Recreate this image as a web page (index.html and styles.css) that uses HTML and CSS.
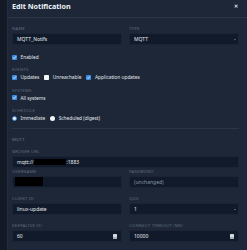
FILE: index.html
```html
<!DOCTYPE html>
<html lang="en">
<head>
    <meta charset="UTF-8">
    <title>Edit Notification</title>
    <link rel="stylesheet" href="styles.css">
</head>
<body>
    <div class="modal">
        <div class="modalHeader">
            <h1>Edit Notification</h1>
            <span class="close">&#x2715;</span>
        </div>

        <div class="modalBody">
            <div class="fieldRow">
                <div class="field">
                    <label>Name</label>
                    <div class="input">MQTT_Notifs</div>
                </div>
                <div class="field">
                    <label>Type</label>
                    <div class="input select">MQTT <span class="caret"></span></div>
                </div>
            </div>

            <div class="checkRow enabled">
                <span class="check on"><svg viewBox="0 0 10 10"><path d="M2.2 5.2l2 2 3.6-4.4" /></svg></span>Enabled
            </div>

            <div class="group">
                <div class="groupLabel">Events</div>
                <div class="checkRow">
                    <span class="check on"><svg viewBox="0 0 10 10"><path d="M2.2 5.2l2 2 3.6-4.4" /></svg></span>Updates
                    <span class="check"></span>Unreachable
                    <span class="check on"><svg viewBox="0 0 10 10"><path d="M2.2 5.2l2 2 3.6-4.4" /></svg></span>Application updates
                </div>
            </div>

            <div class="group">
                <div class="groupLabel">Systems</div>
                <div class="checkRow">
                    <span class="check on"><svg viewBox="0 0 10 10"><path d="M2.2 5.2l2 2 3.6-4.4" /></svg></span>All systems
                </div>
            </div>

            <div class="group">
                <div class="groupLabel">Schedule</div>
                <div class="checkRow">
                    <span class="radio on"></span>Immediate
                    <span class="radio"></span>Scheduled (digest)
                </div>
            </div>

            <hr>

            <div class="groupLabel section">MQTT</div>

            <div class="field">
                <label>Broker URL</label>
                <div class="input">mqtt://<span class="redact wide"></span>:1883</div>
            </div>

            <div class="fieldRow">
                <div class="field">
                    <label>Username</label>
                    <div class="input"><span class="redact user"></span></div>
                </div>
                <div class="field">
                    <label>Password</label>
                    <div class="input muted">(unchanged)</div>
                </div>
            </div>

            <div class="fieldRow">
                <div class="field">
                    <label>Client ID</label>
                    <div class="input">linux-update</div>
                </div>
                <div class="field">
                    <label>QoS</label>
                    <div class="input select">1 <span class="caret"></span></div>
                </div>
            </div>

            <div class="fieldRow">
                <div class="field">
                    <label>Keepalive (s)</label>
                    <div class="input number">60 <span class="spin"></span></div>
                </div>
                <div class="field">
                    <label>Connect timeout (ms)</label>
                    <div class="input number">10000 <span class="spin"></span></div>
                </div>
            </div>
        </div>
    </div>
</body>
</html>
```

FILE: styles.css
```css
* {
    margin: 0;
    padding: 0;
    box-sizing: border-box;
    font-family: "Noto Sans", "Open Sans", sans-serif;
}

body {
    background: #131a25;
    width: 247px;
    height: 250px;
    overflow: hidden;
}

.modal {
    margin-left: 7px;
    height: 250px;
    background: #1d2738;
    border-left: 1px solid #232e40;
    color: #dfe4ea;
}

.modalHeader {
    height: 18px;
    display: flex;
    justify-content: space-between;
    align-items: center;
    padding: 0 9px 5px 4px;
    border-bottom: 1px solid #2a3546;
}

h1 {
    font-size: 7.2px;
    font-weight: 700;
    color: #eef1f5;
}

.close {
    font-size: 5px;
    font-weight: 700;
    color: #dfe4ea;
}

.modalBody {
    padding: 7px 8px 0 4px;
    display: flex;
    flex-direction: column;
}

.fieldRow {
    display: grid;
    grid-template-columns: 1fr 1fr;
    gap: 7px;
    margin-bottom: 7px;
}

.field label,
.groupLabel {
    display: block;
    font-size: 4.3px;
    line-height: 6px;
    letter-spacing: 0.2px;
    text-transform: uppercase;
    color: #5f6b7d;
}

.field label {
    margin-bottom: 2px;
}

.input {
    height: 12px;
    display: flex;
    align-items: center;
    padding: 0 4px;
    background: #111a2a;
    border: 1px solid #1a2435;
    border-radius: 2px;
    font-size: 5px;
    color: #e8ecf1;
    position: relative;
}

.input.muted {
    color: #8a95a5;
}

.caret {
    position: absolute;
    right: 2px;
    top: 5px;
    border-left: 1.3px solid transparent;
    border-right: 1.3px solid transparent;
    border-top: 1.3px solid #8791a0;
}

.spin {
    position: absolute;
    right: 4px;
    top: 3px;
    width: 4px;
    height: 5px;
    background: #d5d9df;
    border-radius: 0.5px;
    box-shadow: inset 0 -2px 0 #a9b0ba;
}

.redact {
    display: inline-block;
    background: #000;
}

.redact.wide {
    width: 32px;
    height: 6px;
    margin-left: 1px;
}

.redact.user {
    width: 28px;
    height: 9px;
    margin-left: -2px;
}

.checkRow {
    display: flex;
    align-items: center;
    height: 6px;
    font-size: 4.8px;
    color: #e3e7ec;
}

.checkRow.enabled {
    margin-bottom: 6px;
    margin-top: 2px;
}

.check,
.radio {
    width: 5px;
    height: 5px;
    margin-right: 3.5px;
    background: #f4f5f7;
    border-radius: 0.8px;
    display: inline-flex;
}

.checkRow .check:not(:first-child),
.checkRow .radio:not(:first-child) {
    margin-left: 5px;
}

.check.on {
    background: #3a8be0;
}

.check svg {
    width: 5px;
    height: 5px;
    fill: none;
    stroke: #fff;
    stroke-width: 1.6;
}

.radio {
    border-radius: 50%;
}

.radio.on {
    background: #f4f5f7;
    border: 1.4px solid #3a8be0;
}

.group {
    display: flex;
    flex-direction: column;
    gap: 2px;
    margin-bottom: 6.5px;
}

hr {
    border: none;
    border-top: 1px solid #2a3546;
    margin: 0 0 7px 0;
}

.groupLabel.section {
    margin-bottom: 6px;
    color: #6b778a;
}
```
